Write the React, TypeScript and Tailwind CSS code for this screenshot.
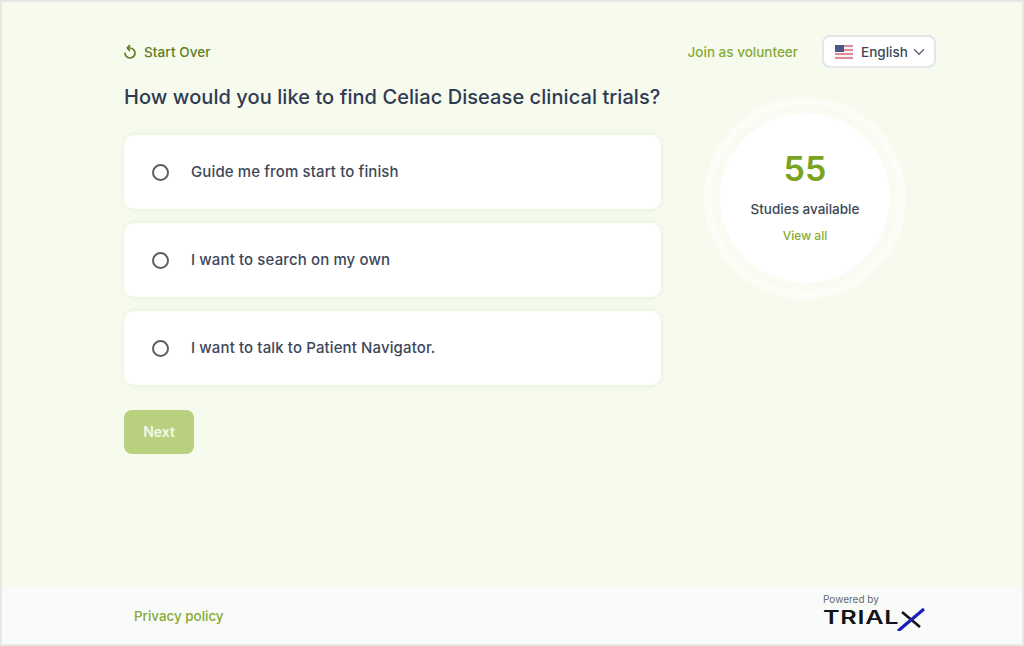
import { useState } from 'react'
import { ChevronDown } from 'lucide-react'

const options = [
  'Guide me from start to finish',
  'I want to search on my own',
  'I want to talk to Patient Navigator.',
]

function UsFlag() {
  return (
    <svg width="18" height="14" viewBox="0 0 18 14" className="shrink-0">
      <rect width="18" height="14" fill="#f3f4f6" />
      <rect y="0" width="18" height="2" fill="#e08a98" />
      <rect y="4" width="18" height="2" fill="#e08a98" />
      <rect y="8" width="18" height="2" fill="#e08a98" />
      <rect y="12" width="18" height="2" fill="#e08a98" />
      <rect width="9" height="7" fill="#4a5a85" />
    </svg>
  )
}

function RestartIcon() {
  return (
    <svg width="14" height="16" viewBox="0 0 14 16" fill="none" stroke="#5f7d24" strokeWidth="1.7" className="shrink-0">
      <path d="M2 8.6 A5 5 0 1 0 7 4 H5" />
      <path d="M7 1.2 L4.2 4 L7 6.8" strokeLinejoin="round" />
    </svg>
  )
}

function TrialxLogo() {
  return (
    <div className="relative flex items-center h-[26px] w-[102px]">
      <span className="text-[18px] leading-none font-semibold tracking-[0.5px] text-[#111318] scale-x-[1.4] origin-left">
        TRIAL
      </span>
      <svg width="102" height="26" viewBox="0 0 102 26" className="absolute left-0 top-0">
        <path d="M79 7 L97 22" stroke="#111318" strokeWidth="2.6" />
        <path d="M101 4 L75 26" stroke="#1a1fb8" strokeWidth="3.2" />
      </svg>
    </div>
  )
}

export default function App() {
  const [selected, setSelected] = useState<number | null>(null)

  return (
    <div className="w-[1024px] h-[646px] flex flex-col border-2 border-[#e6e8e6] bg-[#f6fbee] font-['Inter',sans-serif] overflow-hidden">
      <div className="flex-1 pl-[121px] pr-[86px] pt-[33px]">
        <div className="flex items-center justify-between h-[33px]">
          <button className="flex items-center gap-[7px] text-[13.5px] leading-[20px] tracking-[0.1px] font-medium text-[#5f7d24]">
            <RestartIcon />
            <span className="pt-[1px]">Start Over</span>
          </button>
          <div className="flex items-center gap-[24px]">
            <a className="text-[13.5px] leading-[20px] pt-[1px] font-medium text-[#86aa35]">Join as volunteer</a>
            <button className="flex items-center w-[114px] h-[33px] pl-[11px] gap-[8px] bg-white border-2 border-[#e3e6e7] rounded-lg text-[13.5px] leading-[20px] font-medium text-[#3d4656]">
              <UsFlag />
              <span className="pt-[1px]">English</span>
              <ChevronDown size={18} strokeWidth={1.75} className="text-[#5b6472] -ml-[6px]" />
            </button>
          </div>
        </div>

        <div className="flex gap-[43px]">
          <div className="w-[538px] shrink-0 pl-[1px]">
            <h1 className="mt-[15px] text-xl leading-[28px] font-medium tracking-[0.07px] text-[#2f3a52] whitespace-nowrap">
              How would you like to find Celiac Disease clinical trials?
            </h1>
            <div className="mt-[24px] flex flex-col gap-[14px]">
              {options.map((o, i) => (
                <label
                  key={o}
                  onClick={() => setSelected(i)}
                  className="flex items-center h-[74px] pl-[28px] gap-[22px] bg-white rounded-[10px] shadow-[0_0_6px_rgba(120,140,90,0.12)]"
                >
                  <span className="flex items-center justify-center w-[17px] h-[17px] rounded-full border-2 border-[#5b6068]">
                    {selected === i && <span className="w-[9px] h-[9px] rounded-full bg-[#7fa52a]" />}
                  </span>
                  <span className="text-[15px] font-medium tracking-[0.12px] text-[#3d4759]">{o}</span>
                </label>
              ))}
            </div>
            <button className="mt-[25px] w-[70px] h-[44px] bg-[#b9d17f] rounded-lg text-sm font-semibold text-[#f4f8e8]">
              Next
            </button>
          </div>

          <div className="mt-[29px] w-[202px] h-[202px] shrink-0 rounded-full border-[8px] border-[#fbfdf7] bg-[#f9fcf2] p-[8px]">
            <div className="w-full h-full rounded-full bg-white flex flex-col items-center pt-[36px]">
              <div className="text-[34px] leading-[40px] font-semibold text-[#7aa31e]">55</div>
              <div className="mt-[10px] text-[13.5px] leading-[20px] font-medium text-[#3d4759]">Studies available</div>
              <a className="mt-[9px] text-xs leading-[16px] font-medium text-[#86aa35]">View all</a>
            </div>
          </div>
        </div>
      </div>

      <footer className="h-[57px] shrink-0 flex items-center justify-between pl-[132px] pr-[97px] bg-[#f8fbf8]">
        <a className="text-[13.4px] leading-[20px] pt-[1px] font-medium text-[#86aa35]">Privacy policy</a>
        <div className="flex flex-col -mt-[8px]">
          <span className="text-[10px] leading-[12px] text-[#666a70]">Powered by</span>
          <TrialxLogo />
        </div>
      </footer>
    </div>
  )
}
